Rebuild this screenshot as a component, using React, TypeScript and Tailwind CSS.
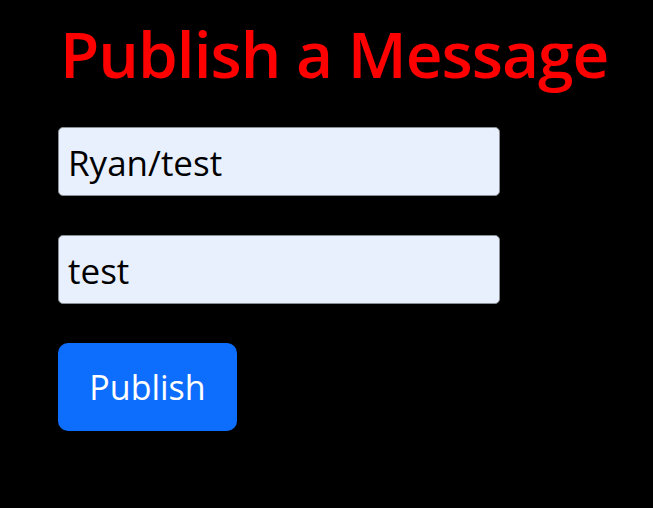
export default function App() {
  return (
    <div className="min-h-[508px] w-full bg-black font-['Open_Sans',sans-serif]">
      <div className="pl-[58px] pt-[14px]">
        <h1 className="whitespace-nowrap pl-[2px] text-[64px] font-semibold leading-[80px] tracking-[-1px] text-[#ff0000]">
          Publish a Message
        </h1>
        <form className="mt-[33px] flex flex-col">
          <input
            type="text"
            defaultValue="Ryan/test"
            className="h-[69px] w-[442px] rounded-[5px] border border-[#8a8f96] bg-[#e8f0fe] px-[9px] pt-[2px] text-[35px] text-black outline-none"
          />
          <input
            type="text"
            defaultValue="test"
            className="mt-[39px] h-[69px] w-[442px] rounded-[5px] border border-[#8a8f96] bg-[#e8f0fe] px-[9px] pt-[2px] text-[35px] text-black outline-none"
          />
          <button
            type="button"
            className="mt-[39px] h-[88px] w-[179px] rounded-[10px] bg-[#0d6efd] text-[34px] text-white"
          >
            Publish
          </button>
        </form>
      </div>
    </div>
  );
}
